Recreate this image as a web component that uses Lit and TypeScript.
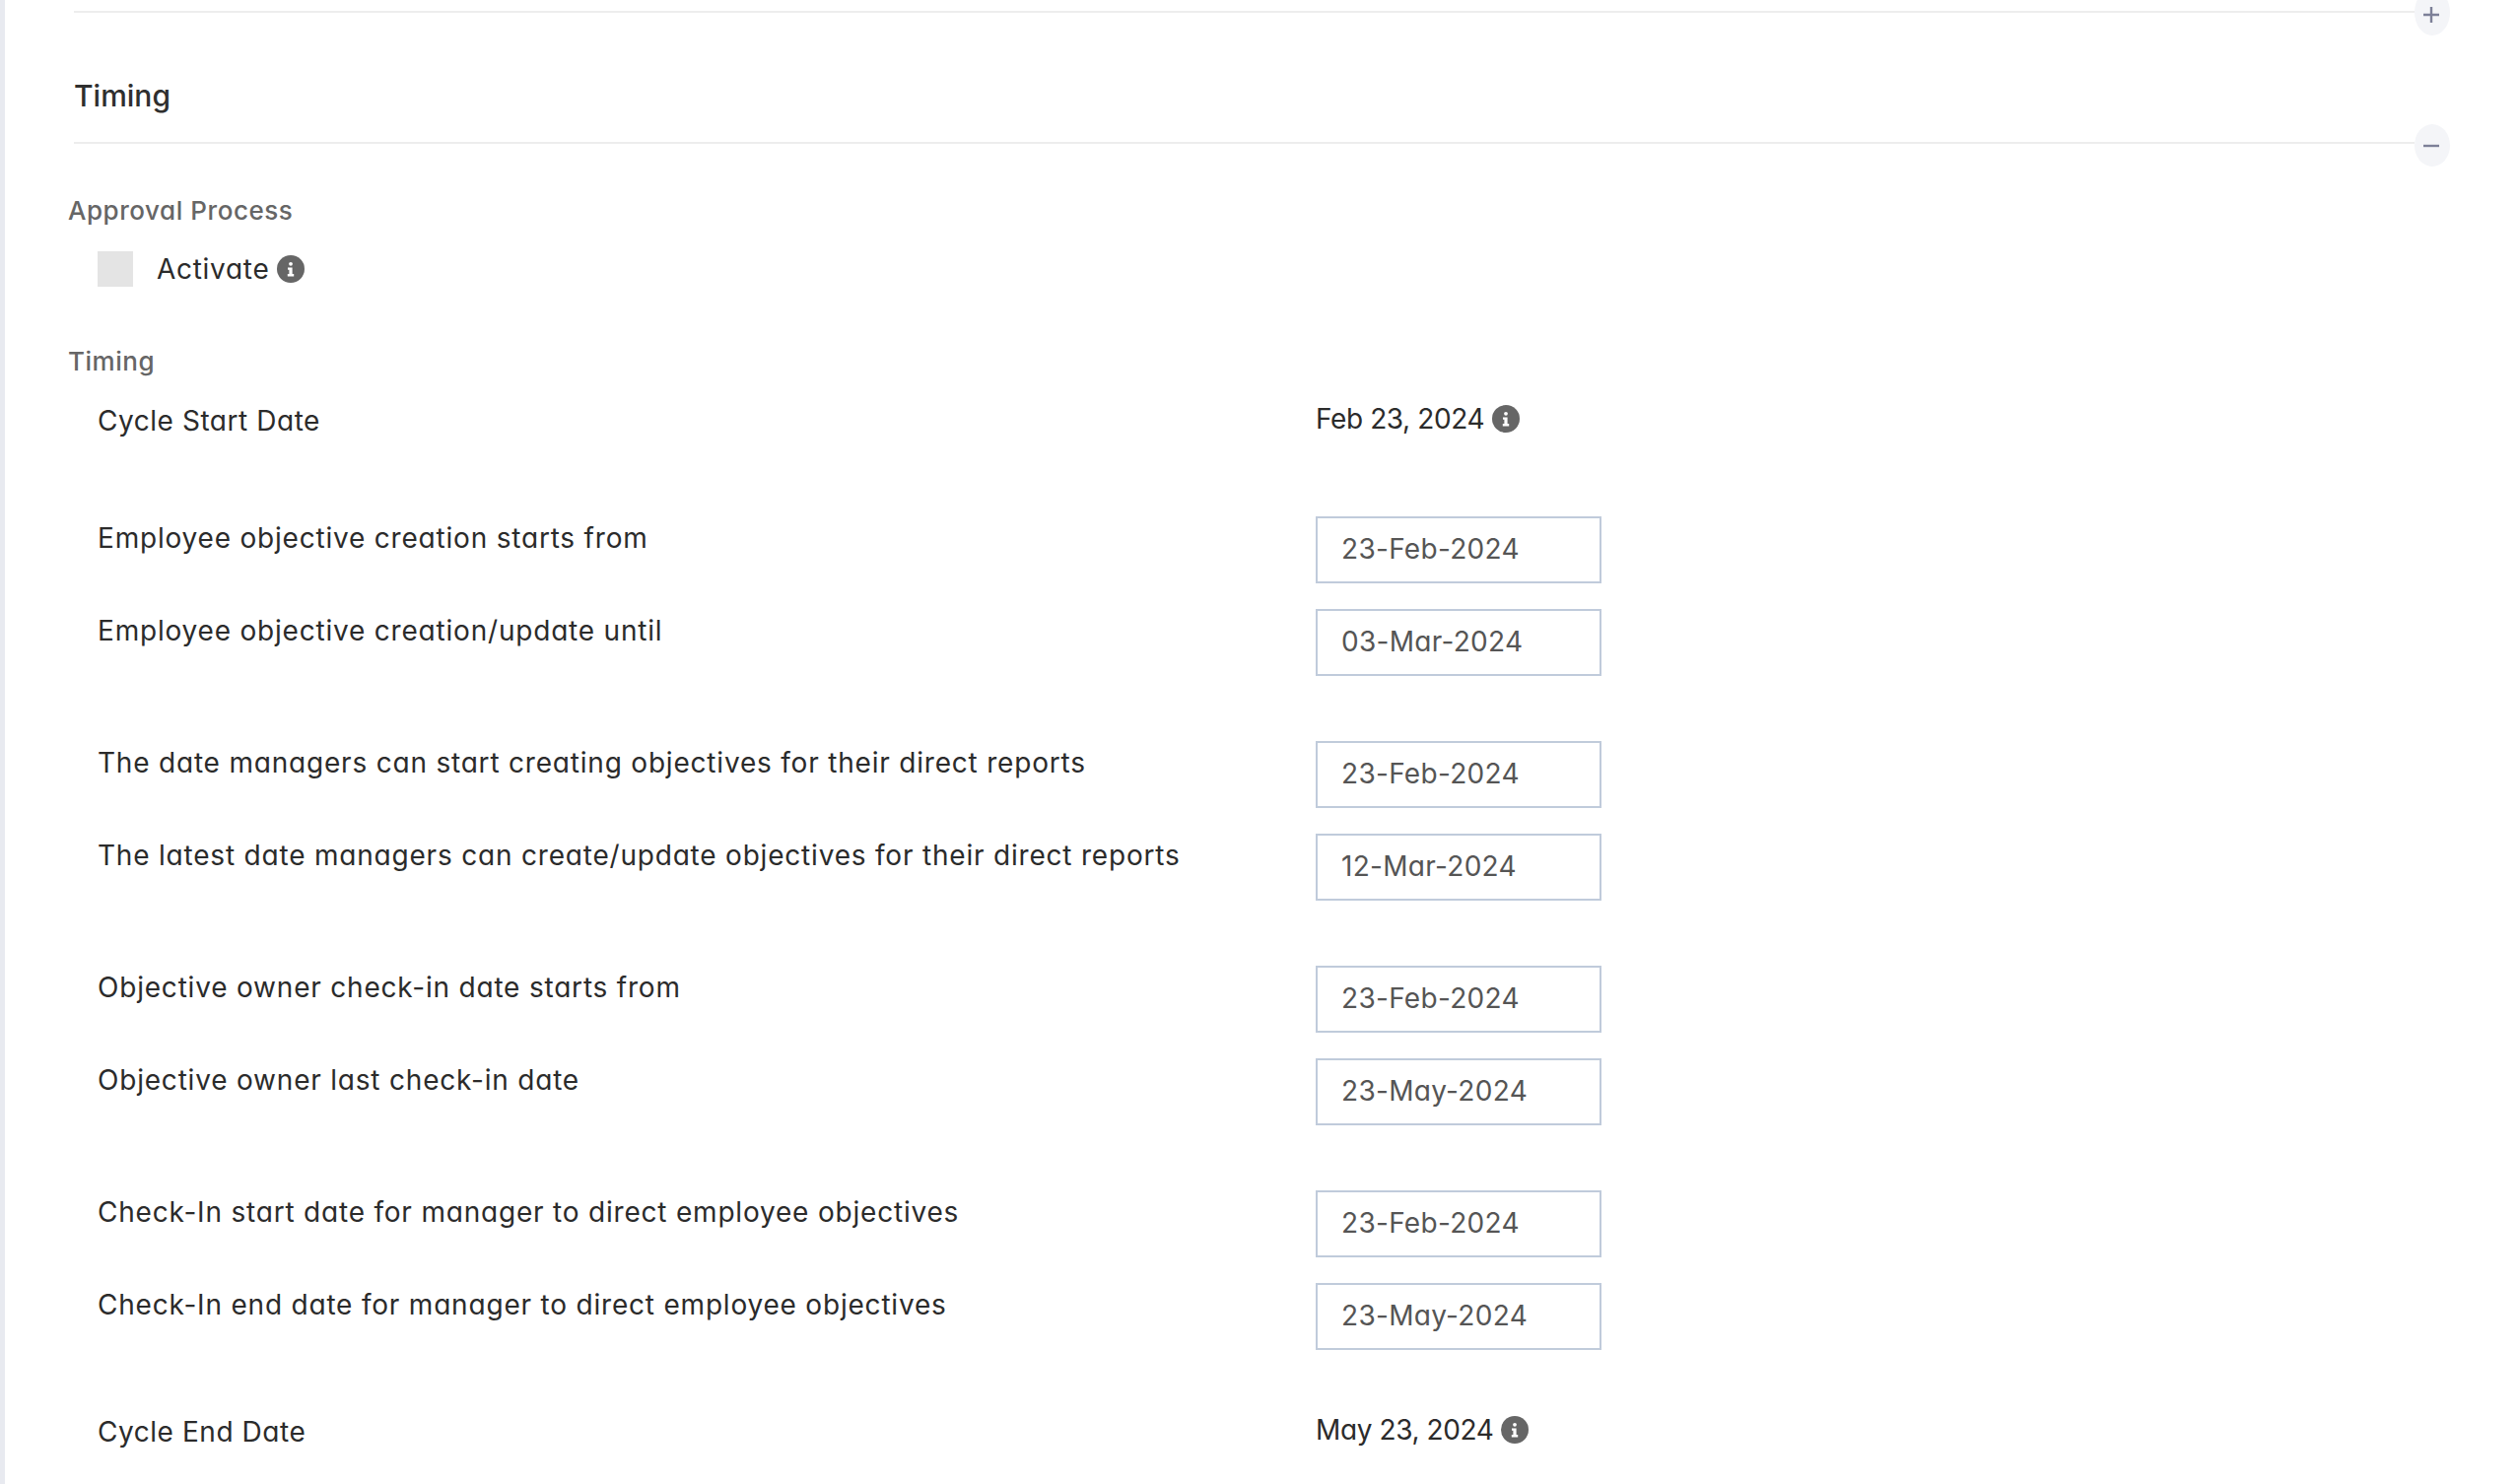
import { LitElement, html, css, svg } from "lit";
import { customElement } from "lit/decorators.js";

const infoIcon = html`<svg class="info" viewBox="0 0 28 28" aria-hidden="true">
  <circle cx="14" cy="14" r="14" fill="#666"></circle>
  <circle cx="14" cy="8.8" r="1.9" fill="#fff"></circle>
  <path d="M11 12.4h4.6v6.6h1.6v2.4h-6.4V19h1.6v-4.2H11z" fill="#fff"></path>
</svg>`;

const groups = [
  [
    ["Employee objective creation starts from", "23-Feb-2024"],
    ["Employee objective creation/update until", "03-Mar-2024"],
  ],
  [
    ["The date managers can start creating objectives for their direct reports", "23-Feb-2024"],
    ["The latest date managers can create/update objectives for their direct reports", "12-Mar-2024"],
  ],
  [
    ["Objective owner check-in date starts from", "23-Feb-2024"],
    ["Objective owner last check-in date", "23-May-2024"],
  ],
  [
    ["Check-In start date for manager to direct employee objectives", "23-Feb-2024"],
    ["Check-In end date for manager to direct employee objectives", "23-May-2024"],
  ],
];

@customElement("app-root")
export class AppRoot extends LitElement {
  static styles = css`
    :host {
      display: block;
      height: 1506px;
      overflow: hidden;
      box-sizing: border-box;
      border-left: 5px solid #e8eaf0;
      background: #fff;
      font-family: Inter, "Liberation Sans", sans-serif;
      font-feature-settings: "cv11" 1;
      font-size: 28px;
      letter-spacing: 0.55px;
      color: #2b2b2b;
    }
    .rule {
      position: relative;
      height: 2px;
      margin-left: 70px;
      margin-right: 106px;
      background: #ededed;
    }
    .rule.top { margin-top: 11px; }
    .toggle {
      position: absolute;
      left: 100%;
      top: -18px;
      width: 36px;
      height: 43px;
      border-radius: 50%;
      background: #f4f5f8;
    }
    .toggle.first { top: -22px; height: 47px; }
    .toggle svg {
      position: absolute;
      left: 8px;
      top: 13px;
      width: 18px;
      height: 18px;
    }
    .toggle.first svg { top: 17px; }
    h2 {
      margin: 0;
      height: 131px;
      box-sizing: border-box;
      padding: 64px 0 0 70px;
      font-size: 30px;
      line-height: 40px;
      font-weight: 500;
      letter-spacing: 0;
      color: #2f2f2f;
    }
    .sub {
      margin-left: 64px;
      font-size: 26px;
      line-height: 36px;
      font-weight: 500;
      color: #666;
    }
    .sub.approval { margin-top: 50px; }
    .sub.timing { margin-top: 58px; }
    .activate {
      display: flex;
      align-items: center;
      margin: 23px 0 0 94px;
      height: 36px;
    }
    .box { width: 36px; height: 36px; background: #e4e4e4; }
    .activate .text { margin-left: 24px; margin-right: 8px; letter-spacing: 0.7px; }
    .info { width: 28px; height: 28px; display: block; flex: none; }
    .row {
      display: grid;
      grid-template-columns: 1236px 1fr;
      margin-left: 94px;
    }
    .plain { line-height: 40px; }
    .value {
      display: flex;
      align-items: center;
      gap: 8px;
      letter-spacing: -0.4px;
      transform: translateY(-2px);
    }
    .row.start { margin-top: 22px; }
    .group { margin-top: 66px; display: flex; flex-direction: column; gap: 26px; }
    .group.first { margin-top: 77px; }
    .label { line-height: 40px; padding-top: 2px; letter-spacing: 0.8px; }
    .input {
      box-sizing: border-box;
      width: 290px;
      height: 68px;
      border: 2px solid #c0cbdb;
      padding-left: 24px;
      line-height: 62px;
      letter-spacing: 0.3px;
      color: #555;
    }
    .row.end { margin-top: 63px; }
  `;

  render() {
    const toggle = (d: string, cls: string) => html`<div class="toggle ${cls}">
      <svg viewBox="0 0 18 18">${svg`<path d=${d} stroke="#7d8098" stroke-width="2.4" fill="none"></path>`}</svg>
    </div>`;
    return html`
      <div class="rule top">${toggle("M1 9h16M9 1v16", "first")}</div>
      <h2>Timing</h2>
      <div class="rule">${toggle("M1 9h16", "")}</div>
      <div class="sub approval">Approval Process</div>
      <div class="activate">
        <div class="box"></div>
        <span class="text">Activate</span>
        ${infoIcon}
      </div>
      <div class="sub timing">Timing</div>
      <div class="row start plain">
        <span>Cycle Start Date</span>
        <span class="value">Feb 23, 2024 ${infoIcon}</span>
      </div>
      ${groups.map(
        (g, i) => html`<div class="group ${i === 0 ? "first" : ""}">
          ${g.map(
            ([l, v]) => html`<div class="row">
              <span class="label">${l}</span>
              <div class="input">${v}</div>
            </div>`
          )}
        </div>`
      )}
      <div class="row end plain">
        <span>Cycle End Date</span>
        <span class="value">May 23, 2024 ${infoIcon}</span>
      </div>
    `;
  }
}
